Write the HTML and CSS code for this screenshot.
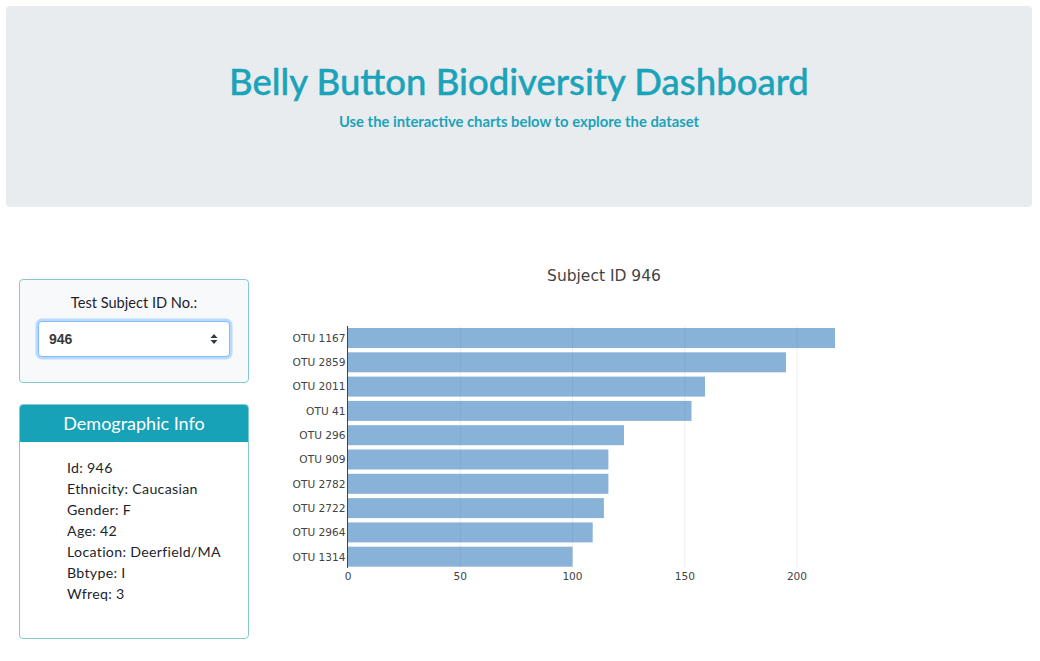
FILE: index.html
```html
<!DOCTYPE html>
<html lang="en">
<head>
<meta charset="utf-8">
<title>Belly Button Biodiversity Dashboard</title>
<link rel="stylesheet" href="styles.css">
</head>
<body>
<header class="jumbotron">
  <h1 class="title">Belly Button Biodiversity Dashboard</h1>
  <p class="subtitle">Use the interactive charts below to explore the dataset</p>
</header>
<main class="row">
  <aside class="sidebar">
    <div class="well">
      <h5 class="well-label">Test Subject ID No.:</h5>
      <div class="select-box"><span class="select-value">946</span>
        <svg class="select-arrows" width="8" height="12" viewBox="0 0 8 12"><path d="M4 1 L7.5 5 H0.5 Z M4 11 L7.5 7 H0.5 Z" fill="#343a40"/></svg>
      </div>
    </div>
    <div class="card">
      <div class="card-header">Demographic Info</div>
      <ul class="card-body">
        <li>Id: 946</li>
        <li>Ethnicity: Caucasian</li>
        <li>Gender: F</li>
        <li>Age: 42</li>
        <li>Location: Deerfield/MA</li>
        <li>Bbtype: I</li>
        <li>Wfreq: 3</li>
      </ul>
    </div>
  </aside>
  <section class="chart">
    <svg width="752" height="350" viewBox="0 0 752 350" class="plot">
      <text x="324" y="31" class="plot-title" text-anchor="middle">Subject ID 946</text>
      <g class="grid">
        <line x1="180.3" y1="76" x2="180.3" y2="318"/>
        <line x1="292.5" y1="76" x2="292.5" y2="318"/>
        <line x1="404.8" y1="76" x2="404.8" y2="318"/>
        <line x1="517" y1="76" x2="517" y2="318"/>
      </g>
      <g class="bars">
        <rect x="68" y="78" width="487" height="20"/>
        <rect x="68" y="102.3" width="438" height="20"/>
        <rect x="68" y="126.6" width="357" height="20"/>
        <rect x="68" y="150.9" width="343.5" height="20"/>
        <rect x="68" y="175.2" width="276" height="20"/>
        <rect x="68" y="199.5" width="260.4" height="20"/>
        <rect x="68" y="223.8" width="260.4" height="20"/>
        <rect x="68" y="248.1" width="255.9" height="20"/>
        <rect x="68" y="272.4" width="244.7" height="20"/>
        <rect x="68" y="296.7" width="224.5" height="20"/>
      </g>
      <line x1="67.5" y1="76" x2="67.5" y2="318" class="axis"/>
      <g class="ylabels" text-anchor="end">
        <text x="65.5" y="91.8">OTU 1167</text>
        <text x="65.5" y="116.1">OTU 2859</text>
        <text x="65.5" y="140.4">OTU 2011</text>
        <text x="65.5" y="164.7">OTU 41</text>
        <text x="65.5" y="189">OTU 296</text>
        <text x="65.5" y="213.3">OTU 909</text>
        <text x="65.5" y="237.6">OTU 2782</text>
        <text x="65.5" y="261.9">OTU 2722</text>
        <text x="65.5" y="286.2">OTU 2964</text>
        <text x="65.5" y="310.5">OTU 1314</text>
      </g>
      <g class="xlabels" text-anchor="middle">
        <text x="68" y="330">0</text>
        <text x="180.3" y="330">50</text>
        <text x="292.5" y="330">100</text>
        <text x="404.8" y="330">150</text>
        <text x="517" y="330">200</text>
      </g>
    </svg>
  </section>
</main>
</body>
</html>
```
FILE: styles.css
```css
* { box-sizing: border-box; }
body {
  margin: 0;
  font-family: "Lato", "Noto Sans", sans-serif;
  color: #212529;
  background: #fff;
}
.jumbotron {
  margin: 6px 8px 0 6px;
  height: 201px;
  background: #e9ecef;
  border-radius: 4px;
  text-align: center;
  padding-top: 53px;
}
.title {
  margin: 0;
  font-size: 36.5px;
  font-weight: 500;
  color: #1ba3ba;
  line-height: 44px;
  -webkit-text-stroke: 0.4px #1ba3ba;
}
.subtitle {
  margin: 9px 0 0;
  font-size: 14.8px;
  font-weight: 700;
  color: #1ba3ba;
  line-height: 18px;
}
.row {
  display: flex;
  margin-top: 43px;
  padding-left: 19px;
  gap: 31px;
}
.sidebar {
  width: 230px;
  flex: none;
  margin-top: 29px;
  display: flex;
  flex-direction: column;
  gap: 21px;
}
.well {
  height: 104px;
  border: 1px solid #84cbd0;
  border-radius: 4px;
  background: #f8f9fa;
  padding: 13px 18px 0 18px;
}
.well-label {
  margin: 0;
  text-align: center;
  font-size: 14.6px;
  font-weight: 400;
  line-height: 20px;
  color: #221f2c;
}
.select-box {
  margin-top: 8px;
  height: 36px;
  border: 1px solid #80bdff;
  border-radius: 4px;
  background: #fff;
  box-shadow: 0 0 0 2.5px rgba(0, 123, 255, 0.25);
  display: flex;
  align-items: center;
  justify-content: space-between;
  padding: 0 11px 0 10px;
}
.select-value {
  font-family: "Liberation Sans", Arial, sans-serif;
  font-size: 14px;
  font-weight: 700;
  color: #3a3a3a;
}
.select-arrows { display: block; }
.card {
  height: 235px;
  border: 1px solid #84cbd0;
  border-radius: 4px;
  overflow: hidden;
}
.card-header {
  height: 37px;
  background: #17a2b8;
  color: #fff;
  font-size: 18px;
  line-height: 37px;
  text-align: center;
}
.card-body {
  list-style: none;
  margin: 0;
  padding: 15px 0 0 47px;
  font-size: 14.2px;
  letter-spacing: 0.3px;
  line-height: 21px;
  color: #221f2c;
}
.chart { flex: none; }
.plot { display: block; }
.plot-title {
  font-family: "DejaVu Sans", Verdana, sans-serif;
  font-size: 15.5px;
  fill: #444;
}
.grid line { stroke: #eeeeee; stroke-width: 1; }
.bars rect { fill: rgb(20, 102, 180); fill-opacity: 0.5; }
.axis { stroke: #444; stroke-width: 1; }
.ylabels text, .xlabels text {
  font-family: "DejaVu Sans", Verdana, sans-serif;
  font-size: 10.6px;
  fill: #444;
}
```
